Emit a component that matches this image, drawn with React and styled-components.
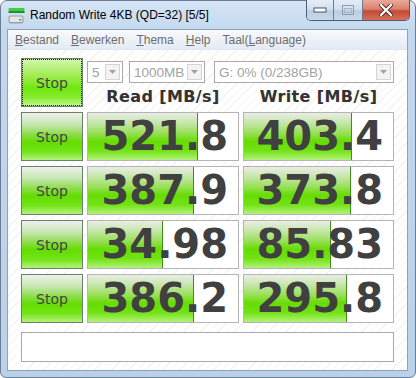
import React from 'react';
import styled, { createGlobalStyle } from 'styled-components';

const GlobalStyle = createGlobalStyle`
  html, body {
    margin: 0;
    padding: 0;
    background: #ffffff;
  }
  body {
    width: 416px;
    height: 378px;
    overflow: hidden;
  }
`;

const results = [
  { read: '521.8', readFill: 110, write: '403.4', writeFill: 108 },
  { read: '387.9', readFill: 106, write: '373.8', writeFill: 107 },
  { read: '34.98', readFill: 75, write: '85.83', writeFill: 87 },
  { read: '386.2', readFill: 106, write: '295.8', writeFill: 103 },
];

const menus = [
  { key: 'B', rest: 'estand' },
  { key: 'B', rest: 'ewerken' },
  { key: 'T', rest: 'hema' },
  { key: 'H', rest: 'elp' },
  { pre: 'Taal(', key: 'L', rest: 'anguage)' },
];

const Window = styled.div`
  box-sizing: border-box;
  width: 416px;
  height: 378px;
  border: 1px solid #6b7d95;
  border-radius: 7px 7px 6px 6px;
  background: linear-gradient(#d6e5f5 0px, #c3d8ee 30px, #bad1ea 100%);
  padding: 0 7px 6px 6px;
  display: flex;
  flex-direction: column;
  font-family: 'Liberation Sans', Arial, sans-serif;
`;

const TitleBar = styled.div`
  height: 28px;
  display: flex;
  align-items: flex-start;
  padding-left: 1px;
`;

const TitleLeft = styled.div`
  display: flex;
  align-items: center;
  height: 28px;
  gap: 5px;
  flex: 1;
`;

const TitleText = styled.span`
  font-size: 12px;
  color: #000;
`;

const Caption = styled.div`
  display: flex;
  margin-top: -1px;
  margin-right: -2px;
  height: 20px;
  border: 1px solid #4b5d77;
  border-top: none;
  border-radius: 0 0 5px 5px;
  overflow: hidden;
`;

const CapButton = styled.div`
  width: ${p => p.$w}px;
  display: flex;
  align-items: center;
  justify-content: center;
  border-left: ${p => (p.$first ? 'none' : '1px solid #6b7d95')};
  background: ${p =>
    p.$close
      ? 'linear-gradient(#e9a99b 0%, #d9816f 45%, #c44a33 55%, #d4705c 100%)'
      : 'linear-gradient(#e4edf7 0%, #d3e0ee 45%, #bccee3 55%, #c9d9ea 100%)'};
`;

const Panel = styled.div`
  flex: 1;
  display: flex;
  flex-direction: column;
  border: 1px solid #8ea2bb;
  background: #ffffff;
`;

const MenuBar = styled.div`
  height: 20px;
  display: flex;
  align-items: center;
  padding-left: 7px;
  gap: 12px;
  background: linear-gradient(#f7f9fc, #e4ebf4);
  border-bottom: 1px solid #dfe6ef;
  box-sizing: border-box;
`;

const MenuItem = styled.span`
  font-size: 12px;
  color: #6d6d6d;
  u {
    text-decoration: underline;
    text-underline-offset: 1px;
  }
`;

const Client = styled.div`
  flex: 1;
  padding: 8px 13px 0 13px;
  background: repeating-linear-gradient(135deg, #ffffff 0px, #ffffff 5px, #f3f3f3 5px, #f3f3f3 6px);
`;

const Grid = styled.div`
  display: grid;
  grid-template-columns: 62px 152px 151px;
  grid-auto-rows: 49px;
  column-gap: 4px;
  row-gap: 5px;
`;

const StopButton = styled.div`
  box-sizing: border-box;
  border: 1px solid #6b7f6b;
  display: flex;
  align-items: center;
  justify-content: center;
  font-family: 'DejaVu Sans', sans-serif;
  font-size: 14px;
  color: #444;
  background: ${p =>
    p.$active
      ? 'linear-gradient(#d4f5b0 0%, #9bec48 40%, #6fe810 62%, #86ec30 82%, #c2f890 100%)'
      : 'linear-gradient(#eef1ec 0%, #c6e6b0 25%, #8edd4c 45%, #63dd00 62%, #74e41a 82%, #b4f27a 100%)'};
`;

const FocusRing = styled.div`
  box-sizing: border-box;
  width: 100%;
  height: 100%;
  border: 1px dotted #222;
  display: flex;
  align-items: center;
  justify-content: center;
`;

const TopRight = styled.div`
  grid-column: 2 / 4;
  display: flex;
  flex-direction: column;
`;

const SelectRow = styled.div`
  display: flex;
  margin-top: 3px;
  height: 22px;
`;

const Select = styled.div`
  box-sizing: border-box;
  width: ${p => p.$w}px;
  margin-left: ${p => p.$gap}px;
  height: 22px;
  border: 1px solid #a9a9a9;
  background: #fff;
  display: flex;
  align-items: center;
  padding: 2px;
`;

const SelectText = styled.span`
  flex: 1;
  font-size: 13.5px;
  color: #a3a3a3;
  padding-left: 2px;
`;

const SelectArrow = styled.div`
  box-sizing: border-box;
  width: 15px;
  height: 16px;
  border: 1px solid #d4d4d4;
  background: #f3f3f3;
  display: flex;
  align-items: center;
  justify-content: center;
`;

const HeaderRow = styled.div`
  display: grid;
  grid-template-columns: 152px 151px;
  column-gap: 4px;
  margin-top: 4px;
  line-height: 20px;
`;

const Header = styled.div`
  text-align: center;
  font-family: 'DejaVu Sans', sans-serif;
  font-weight: bold;
  font-size: 16px;
  letter-spacing: 0.4px;
  color: #333;
  text-shadow: 0 0 1px #e8e0d0;
`;

const Cell = styled.div`
  box-sizing: border-box;
  border: 1px solid #b4b4b4;
  background: #fff;
  display: grid;
`;

const Bar = styled.div`
  grid-area: 1 / 1;
  box-sizing: border-box;
  height: 100%;
  border-right: 1px solid #3f8d1d;
  background: linear-gradient(#eaede6 0%, #c4e6a6 22%, #9ae05a 42%, #66dc02 60%, #72e214 80%, #b2f27a 100%);
`;

const Value = styled.div`
  grid-area: 1 / 1;
  z-index: 1;
  text-align: right;
  padding-right: 10px;
  font-family: 'DejaVu Sans', sans-serif;
  font-weight: bold;
  font-size: 40px;
  line-height: 47px;
  color: #404040;
`;

const Status = styled.div`
  box-sizing: border-box;
  margin-top: 9px;
  height: 30px;
  width: 373px;
  border: 1px solid #a9a9a9;
  background: #fff;
`;

const DriveIcon = () => (
  <svg width="17" height="17" viewBox="0 0 17 17">
    <rect x="0.5" y="1" width="16" height="3" rx="1" fill="#3fcf3f" />
    <rect x="0.5" y="4" width="16" height="2" fill="#1f8f2a" />
    <rect x="0.5" y="8.5" width="15" height="8" rx="2" fill="#9aa0a6" />
    <rect x="1.5" y="9.5" width="13" height="5.5" rx="1.5" fill="#e4e6e8" />
    <rect x="11" y="12" width="2.5" height="1.5" fill="#39b54a" />
  </svg>
);

const Arrow = () => (
  <svg width="7" height="4" viewBox="0 0 7 4">
    <path d="M0 0 L7 0 L3.5 4 Z" fill="#a0a0a0" />
  </svg>
);

const App = () => (
  <>
    <GlobalStyle />
    <Window>
      <TitleBar>
        <TitleLeft>
          <DriveIcon />
          <TitleText>Random Write 4KB (QD=32) [5/5]</TitleText>
        </TitleLeft>
        <Caption>
          <CapButton $w={26} $first>
            <svg width="14" height="6" viewBox="0 0 14 6">
              <rect x="1" y="1" width="12" height="4" fill="#fff" stroke="#48566a" strokeWidth="1" />
            </svg>
          </CapButton>
          <CapButton $w={28}>
            <svg width="12" height="10" viewBox="0 0 12 10">
              <rect x="0.5" y="0.5" width="11" height="9" fill="none" stroke="#8d9bb0" strokeWidth="1" />
              <rect x="2.5" y="3.5" width="7" height="4" fill="none" stroke="#a9b6c7" strokeWidth="1" />
            </svg>
          </CapButton>
          <CapButton $w={46} $close>
            <svg width="14" height="12" viewBox="0 0 14 12">
              <path d="M2 1 L12 11 M12 1 L2 11" stroke="#4a2a26" strokeWidth="4" strokeLinecap="square" />
              <path d="M2 1 L12 11 M12 1 L2 11" stroke="#ffffff" strokeWidth="2.2" strokeLinecap="square" />
            </svg>
          </CapButton>
        </Caption>
      </TitleBar>
      <Panel>
        <MenuBar>
          {menus.map((m, i) => (
            <MenuItem key={i}>
              {m.pre}
              <u>{m.key}</u>
              {m.rest}
            </MenuItem>
          ))}
        </MenuBar>
        <Client>
          <Grid>
            <StopButton $active>
              <FocusRing>Stop</FocusRing>
            </StopButton>
            <TopRight>
              <SelectRow>
                <Select $w={36} $gap={0}>
                  <SelectText>5</SelectText>
                  <SelectArrow><Arrow /></SelectArrow>
                </Select>
                <Select $w={76} $gap={6}>
                  <SelectText>1000MB</SelectText>
                  <SelectArrow><Arrow /></SelectArrow>
                </Select>
                <Select $w={180} $gap={9}>
                  <SelectText>G: 0% (0/238GB)</SelectText>
                  <SelectArrow><Arrow /></SelectArrow>
                </Select>
              </SelectRow>
              <HeaderRow>
                <Header>Read [MB/s]</Header>
                <Header>Write [MB/s]</Header>
              </HeaderRow>
            </TopRight>
            {results.map((r, i) => (
              <React.Fragment key={i}>
                <StopButton>Stop</StopButton>
                <Cell>
                  <Bar style={{ width: r.readFill }} />
                  <Value>{r.read}</Value>
                </Cell>
                <Cell>
                  <Bar style={{ width: r.writeFill }} />
                  <Value>{r.write}</Value>
                </Cell>
              </React.Fragment>
            ))}
          </Grid>
          <Status />
        </Client>
      </Panel>
    </Window>
  </>
);

export default App;
